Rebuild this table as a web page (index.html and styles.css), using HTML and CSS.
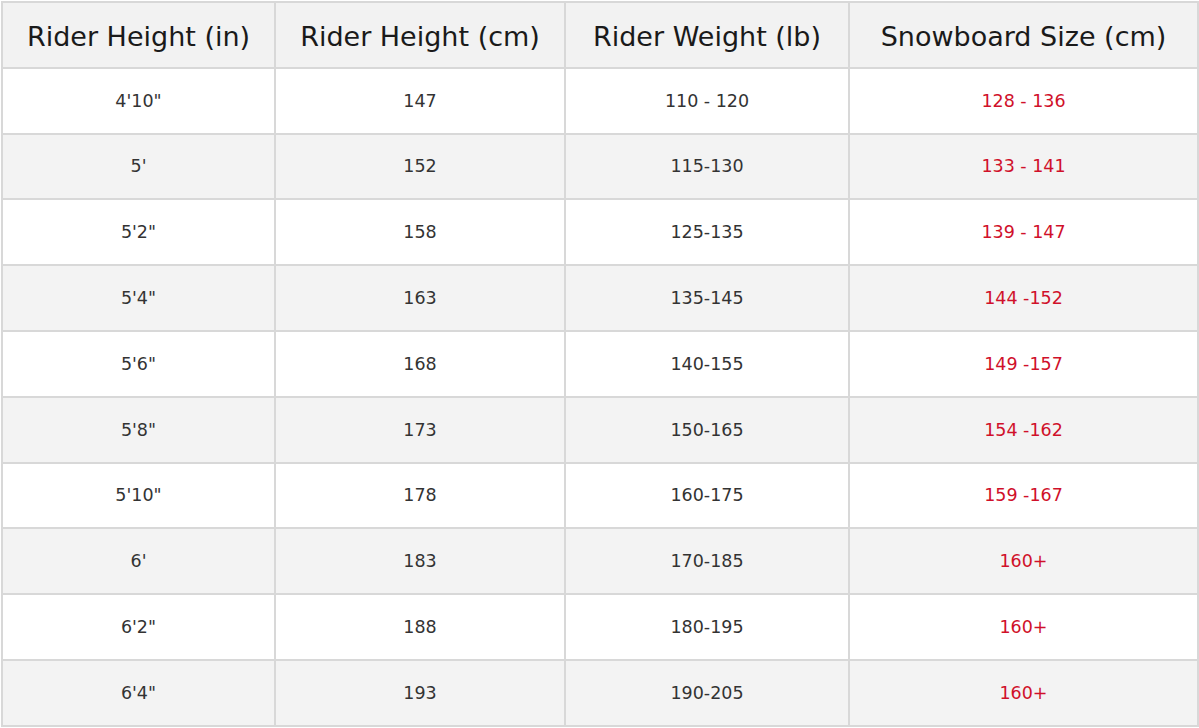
FILE: index.html
```html
<!DOCTYPE html>
<html>
<head>
<meta charset="utf-8">
<link rel="stylesheet" href="styles.css">
</head>
<body>
<table class="size-chart">
  <colgroup>
    <col class="c1"><col class="c2"><col class="c3"><col class="c4">
  </colgroup>
  <thead>
    <tr><th>Rider Height (in)</th><th>Rider Height (cm)</th><th>Rider Weight (lb)</th><th>Snowboard Size (cm)</th></tr>
  </thead>
  <tbody>
    <tr><td>4'10"</td><td>147</td><td>110 - 120</td><td class="size">128 - 136</td></tr>
    <tr><td>5'</td><td>152</td><td>115-130</td><td class="size">133 - 141</td></tr>
    <tr><td>5'2"</td><td>158</td><td>125-135</td><td class="size">139 - 147</td></tr>
    <tr><td>5'4"</td><td>163</td><td>135-145</td><td class="size">144 -152</td></tr>
    <tr><td>5'6"</td><td>168</td><td>140-155</td><td class="size">149 -157</td></tr>
    <tr><td>5'8"</td><td>173</td><td>150-165</td><td class="size">154 -162</td></tr>
    <tr><td>5'10"</td><td>178</td><td>160-175</td><td class="size">159 -167</td></tr>
    <tr><td>6'</td><td>183</td><td>170-185</td><td class="size">160+</td></tr>
    <tr><td>6'2"</td><td>188</td><td>180-195</td><td class="size">160+</td></tr>
    <tr><td>6'4"</td><td>193</td><td>190-205</td><td class="size">160+</td></tr>
  </tbody>
</table>
</body>
</html>
```
FILE: styles.css
```css
html, body {
  margin: 0;
  padding: 0;
  background: #ffffff;
}
body {
  padding: 1px;
  font-family: "DejaVu Sans", sans-serif;
}
.size-chart {
  border-collapse: collapse;
  table-layout: fixed;
  width: 1196px;
}
.c1 { width: 273px; }
.c2 { width: 290px; }
.c3 { width: 284px; }
.c4 { width: 349px; }
.size-chart th,
.size-chart td {
  border: 2px solid #d8d8d8;
  text-align: center;
  vertical-align: middle;
  padding: 0;
  height: 63.8px;
}
.size-chart th {
  background: #f2f2f2;
  font-weight: normal;
  font-size: 27px;
  color: #1a1a1a;
  padding-top: 3px;
  height: 60.8px;
}
.size-chart td {
  font-size: 17.5px;
  color: #333333;
}
.size-chart tbody tr:nth-child(even) td {
  background: #f3f3f3;
}
.size-chart td.size {
  color: #d0102a;
}
```
